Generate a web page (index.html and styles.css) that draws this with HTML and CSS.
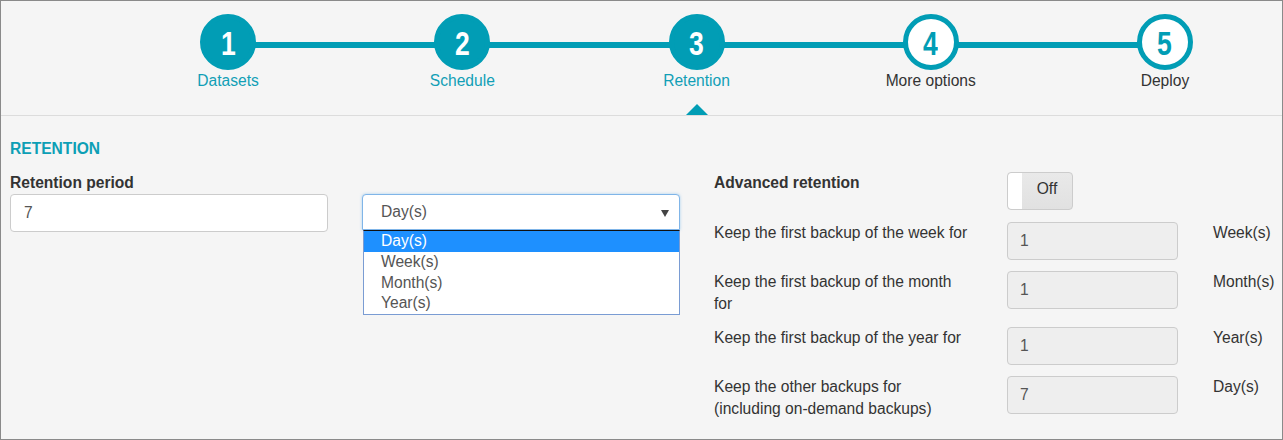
FILE: index.html
```html
<!DOCTYPE html>
<html lang="en">
<head>
<meta charset="utf-8">
<title>Retention</title>
<link rel="stylesheet" href="styles.css">
</head>
<body>
<div class="wizard">
  <div class="steps">
    <div class="step done">
      <div class="circle"><span class="num">1</span></div>
      <div class="step-label">Datasets</div>
    </div>
    <div class="step done">
      <div class="circle"><span class="num">2</span></div>
      <div class="step-label">Schedule</div>
    </div>
    <div class="step active">
      <div class="circle"><span class="num">3</span></div>
      <div class="step-label">Retention</div>
      <div class="pointer"></div>
    </div>
    <div class="step todo">
      <div class="circle"><span class="num">4</span></div>
      <div class="step-label">More options</div>
    </div>
    <div class="step todo">
      <div class="circle"><span class="num">5</span></div>
      <div class="step-label">Deploy</div>
    </div>
  </div>

  <div class="content">
    <h3 class="section-title">RETENTION</h3>
    <div class="cols">
      <div class="col-left">
        <div class="field-label">Retention period</div>
        <div class="period-row">
          <input class="text-input" type="text" value="7">
          <div class="select-wrap">
            <div class="select"><span>Day(s)</span><span class="caret"></span></div>
            <ul class="listbox">
              <li class="option selected">Day(s)</li>
              <li class="option">Week(s)</li>
              <li class="option">Month(s)</li>
              <li class="option">Year(s)</li>
            </ul>
          </div>
        </div>
      </div>

      <div class="col-right">
        <div class="row-label bold">Advanced retention</div>
        <div class="toggle"><span class="knob"></span><span class="toggle-text">Off</span></div>
        <div></div>

        <div class="row-label">Keep the first backup of the week for</div>
        <input class="text-input disabled" type="text" value="1" disabled>
        <div class="unit">Week(s)</div>

        <div class="row-label">Keep the first backup of the month for</div>
        <input class="text-input disabled" type="text" value="1" disabled>
        <div class="unit">Month(s)</div>

        <div class="row-label">Keep the first backup of the year for</div>
        <input class="text-input disabled" type="text" value="1" disabled>
        <div class="unit">Year(s)</div>

        <div class="row-label">Keep the other backups for (including on-demand backups)</div>
        <input class="text-input disabled" type="text" value="7" disabled>
        <div class="unit">Day(s)</div>
      </div>
    </div>
  </div>
</div>
</body>
</html>
```

FILE: styles.css
```css
* { box-sizing: border-box; }

body {
  margin: 0;
  font-family: "Liberation Sans", Arial, sans-serif;
  font-size: 15.6px;
  color: #333;
  background: #f5f5f5;
}

.wizard {
  width: 1283px;
  height: 440px;
  border: 1px solid #8a8a8a;
  background: #f5f5f5;
  overflow: hidden;
}

/* ---------- steps ---------- */
.steps {
  display: flex;
  height: 115px;
  padding: 13px 0 0 110px;
  border-bottom: 1px solid #dcdcdc;
}

.step {
  position: relative;
  flex: 1;
  display: flex;
  flex-direction: column;
  align-items: center;
}

.step:not(:first-child)::before {
  content: "";
  position: absolute;
  top: 28px;
  right: 50%;
  width: 100%;
  height: 6px;
  background: #019db5;
}

.circle {
  position: relative;
  z-index: 1;
  width: 56px;
  height: 56px;
  border-radius: 50%;
  background: #019db5;
  border: 5px solid #019db5;
  display: flex;
  align-items: center;
  justify-content: center;
  color: #fff;
}

.step.todo .circle {
  background: #fff;
  color: #019db5;
}

.num {
  display: block;
  font-family: "Liberation Sans", Arial, sans-serif;
  font-weight: bold;
  font-size: 34px;
  line-height: 34px;
  transform: scaleX(0.78);
  margin-top: 1px;
}

.step-label {
  margin-top: 1px;
  line-height: 20px;
  color: #119fb6;
}

.step.todo .step-label { color: #333; }

.pointer {
  position: absolute;
  top: 90px;
  left: 50%;
  margin-left: -11px;
  width: 0;
  height: 0;
  border-left: 11px solid transparent;
  border-right: 11px solid transparent;
  border-bottom: 11px solid #019db5;
}

/* ---------- content ---------- */
.content {
  padding: 22px 10px 0 9px;
}

.section-title {
  margin: 0;
  font-size: 15.6px;
  line-height: 22px;
  font-weight: bold;
  color: #0d9fb5;
}

.cols {
  display: flex;
  gap: 34px;
  margin-top: 12px;
}

.col-left {
  width: 670px;
}

.field-label {
  font-weight: bold;
  line-height: 22px;
}

.period-row {
  display: flex;
  gap: 34px;
  align-items: flex-start;
}

.text-input {
  display: block;
  width: 318px;
  height: 38px;
  margin: 0;
  padding: 0 12px 0 13px;
  border: 1px solid #cccccc;
  border-radius: 4px;
  background: #fff;
  font-family: inherit;
  font-size: 15.6px;
  color: #555;
  outline: none;
}

.select-wrap {
  position: relative;
  width: 318px;
}

.select {
  height: 36px;
  display: flex;
  align-items: center;
  justify-content: space-between;
  padding: 0 10px 0 18px;
  border: 1px solid #80b5e8;
  border-radius: 4px 4px 0 0;
  background: #fff;
  color: #555;
  box-shadow: 0 0 3px rgba(102, 175, 233, 0.55);
}

.caret {
  width: 0;
  height: 0;
  border-left: 4px solid transparent;
  border-right: 4px solid transparent;
  border-top: 7px solid #444;
  margin-top: 2px;
}

.listbox {
  position: absolute;
  top: 36px;
  left: 1px;
  width: 317px;
  margin: 0;
  padding: 0;
  list-style: none;
  background: #fff;
  border: 1px solid #7a9cd3;
  border-top: 1px solid #111;
  z-index: 5;
}

.option {
  height: 20.75px;
  line-height: 20.75px;
  padding-left: 17px;
  color: #555;
}

.option.selected {
  background: #1e90ff;
  color: #fff;
}

/* ---------- right column ---------- */
.col-right {
  flex: 1;
  display: grid;
  grid-template-columns: 293px 206px 1fr;
  row-gap: 11.5px;
  align-items: start;
}

.row-label {
  line-height: 22px;
  padding-right: 37px;
}

.row-label.bold {
  font-weight: bold;
}

.toggle {
  display: flex;
  width: 66px;
  height: 38px;
  border: 1px solid #cccccc;
  border-radius: 4px;
  background: linear-gradient(#e9e9e9, #e1e1e1);
  overflow: hidden;
}

.knob {
  width: 14px;
  background: #fff;
  border-radius: 4px 0 0 4px;
}

.toggle-text {
  flex: 1;
  display: flex;
  align-items: center;
  justify-content: center;
  padding-bottom: 4px;
  color: #333;
}

.text-input.disabled {
  width: 171px;
  padding-left: 12px;
  background: #eeeeee;
  color: #555;
  -webkit-text-fill-color: #555;
  opacity: 1;
}

.unit {
  line-height: 22px;
}
```
